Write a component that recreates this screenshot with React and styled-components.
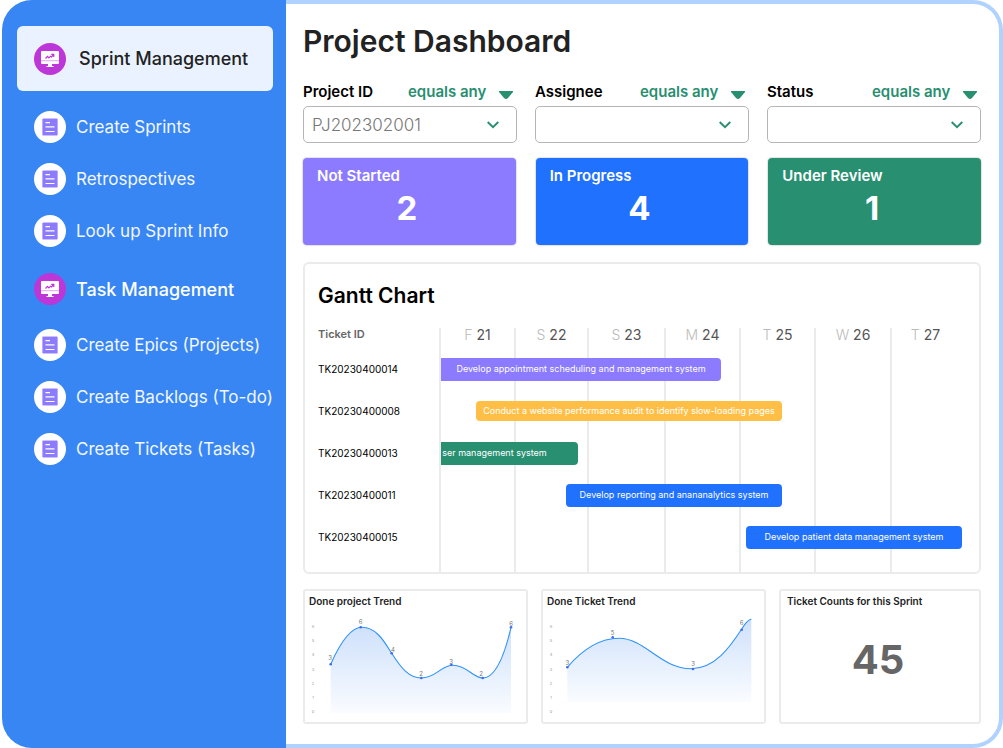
import React from "react";
import styled, { createGlobalStyle } from "styled-components";

const GlobalStyle = createGlobalStyle`
  *, *::before, *::after { box-sizing: border-box; }
  body {
    margin: 0;
    background: #fff;
    font-family: Inter, "Liberation Sans", sans-serif;
    color: #000;
  }
  h1, h2, h3, p, ul { margin: 0; padding: 0; }
  ul { list-style: none; }
`;

const colors = {
  purple: "#8c7aff",
  blue: "#2171ff",
  green: "#298f71",
  amber: "#ffbf47",
  frame: "#b0d2ff",
  line: "#ebebeb",
};

const Shell = styled.div`
  display: flex;
  min-height: 100vh;
  padding-left: 2px;
`;

const Sidebar = styled.nav`
  flex: 0 0 284px;
  padding: 26px 13px 26px 15px;
  background: #3886f4;
  border-radius: 30px 0 0 30px;
`;

const NavHeading = styled.a`
  display: flex;
  align-items: center;
  gap: ${(p) => (p.$active ? 13 : 10)}px;
  height: ${(p) => (p.$active ? 65 : 60)}px;
  margin-top: ${(p) => (p.$active ? 0 : 2)}px;
  margin-bottom: ${(p) => (p.$active ? 10 : 0)}px;
  padding-left: 17px;
  border-radius: 6px;
  background: ${(p) => (p.$active ? "#eaf2ff" : "transparent")};
  color: ${(p) => (p.$active ? "#222" : "#fff")};
  font-size: 18px;
  font-weight: 500;
  white-space: nowrap;
  text-decoration: none;
`;

const NavLink = styled.a`
  display: flex;
  align-items: center;
  gap: 10px;
  height: 52px;
  padding-left: 17px;
  color: #f3f7ff;
  font-size: 17px;
  font-weight: 400;
  white-space: nowrap;
  text-decoration: none;
`;

const Badge = styled.span`
  display: flex;
  flex: none;
  align-items: center;
  justify-content: center;
  width: 32px;
  height: 32px;
  border-radius: 50%;
  background: ${(p) => p.$color};
`;

const Main = styled.main`
  flex: 1;
  min-width: 0;
  padding: 16px 18px 16px 17px;
  border: 4px solid ${colors.frame};
  border-left: 0;
  border-radius: 0 30px 30px 0;
`;

const PageTitle = styled.h1`
  color: #222;
  font-size: 30px;
  font-weight: 600;
  line-height: 42px;
`;

const Filters = styled.div`
  display: grid;
  grid-template-columns: repeat(3, 1fr);
  gap: 18px;
  margin-top: 18px;
`;

const FilterHead = styled.div`
  display: flex;
  align-items: center;
  height: 23px;
  margin-bottom: 3px;
  padding-right: 4px;
`;

const FilterLabel = styled.label`
  flex: 1;
  font-size: 15px;
  font-weight: 600;
`;

const Operator = styled.select`
  appearance: none;
  margin: 0 12px 0 0;
  padding: 0;
  border: 0;
  background: none;
  color: ${colors.green};
  font: 600 15px Inter, sans-serif;
`;

const SelectWrap = styled.div`
  position: relative;
  svg {
    position: absolute;
    right: 17px;
    top: 14px;
    pointer-events: none;
  }
`;

const ValueSelect = styled.select`
  appearance: none;
  display: block;
  width: 100%;
  height: 37px;
  padding: 0 40px 0 8px;
  border: 1px solid #b5b5b5;
  border-radius: 5px;
  background: #fff;
  color: #777;
  font: 300 17px Inter, sans-serif;
`;

const Stats = styled.div`
  display: grid;
  grid-template-columns: repeat(3, 1fr);
  gap: 20px;
  margin-top: 15px;
`;

const StatCard = styled.section`
  height: 87px;
  padding: 8px 14px;
  border-radius: 4px;
  background: ${(p) => p.$color};
  box-shadow: 0 0 1px 1px rgba(90, 90, 120, 0.18);
  color: #fff;
`;

const StatLabel = styled.h2`
  font-size: 15px;
  font-weight: 600;
  line-height: 20px;
`;

const StatValue = styled.p`
  padding-right: 5px;
  font-size: 33px;
  font-weight: 700;
  line-height: 44px;
  text-align: center;
`;

const Gantt = styled.section`
  margin-top: 17px;
  padding: 18px 0 0 13px;
  border: 2px solid ${colors.line};
  border-radius: 6px;
`;

const GanttTitle = styled.h2`
  font-size: 21px;
  font-weight: 600;
  line-height: 28px;
`;

const GanttBody = styled.div`
  display: flex;
  margin-top: 18px;
`;

const TicketColumn = styled.div`
  flex: 0 0 121px;
`;

const TicketHead = styled.h3`
  height: 20px;
  color: #666;
  font-size: 11px;
  font-weight: 600;
  line-height: 13px;
`;

const Ticket = styled.li`
  height: 42px;
  font-size: 10px;
  line-height: 42px;
`;

const Timeline = styled.div`
  position: relative;
  flex: 1;
  min-width: 0;
`;

const Days = styled.div`
  display: grid;
  grid-template-columns: 75fr 73fr 77fr 75fr 75fr 76fr 89fr;
  height: 244px;
`;

const Day = styled.div`
  border-left: 2px solid ${colors.line};
  color: #555;
  font-size: 14px;
  line-height: 14px;
  text-align: center;
  &:last-child { padding-right: 20px; }
  span { color: #bbb; font-weight: 300; }
`;

const Bars = styled.ul`
  position: absolute;
  inset: 20px 0 auto 0;
`;

const BarRow = styled.li`
  display: flex;
  align-items: center;
  height: 42px;
`;

const Bar = styled.div`
  height: ${(p) => (p.$slim ? 20 : 23)}px;
  padding: ${(p) => (p.$open ? "0 30px 0 0" : "0")};
  border-radius: ${(p) => (p.$flat ? "0 4px 4px 0" : "4px")};
  background: ${(p) => p.$color};
  color: #fff;
  font-size: 9px;
  line-height: ${(p) => (p.$slim ? 19 : 22)}px;
  text-align: center;
  white-space: nowrap;
`;

const Reports = styled.div`
  display: grid;
  grid-template-columns: 225fr 225fr 202fr;
  gap: 13px;
  margin-top: 15px;
`;

const Report = styled.section`
  height: 135px;
  border: 2px solid ${colors.line};
  border-radius: 3px;
  svg { display: block; width: 100%; }
`;

const ReportTitle = styled.h2`
  padding-left: ${(p) => (p.$wide ? 6 : 4)}px;
  color: #222;
  font-size: 10px;
  font-weight: 600;
  line-height: 20px;
`;

const BigNumber = styled.p`
  padding-right: 4px;
  color: #666;
  font-size: 40px;
  font-weight: 700;
  line-height: 98px;
  text-align: center;
`;

const DocIcon = () => (
  <svg width="16" height="18" viewBox="0 0 16 18" aria-hidden="true">
    <rect x="0.5" width="15" height="18" rx="0.8" fill="#c9c0ff" />
    <rect x="0.5" y="1" width="15" height="16" fill="#8c7aff" />
    <path d="M3.5 4.7h4.5M3.5 8.9h9M3.5 13.5h9" stroke="#fff" strokeWidth="1.2" />
  </svg>
);

const MonitorIcon = () => (
  <svg width="18" height="16" viewBox="0 0 18 16" aria-hidden="true">
    <rect width="18" height="13" rx="1" fill="#fff" />
    <path d="M7 13h4v2h1.5v1h-7v-1H7z" fill="#fff" />
    <path d="M0 9.7h18" stroke="#d98be8" strokeWidth="0.8" />
    <path d="M4.5 7.5l2-2.2 1.4 1.5 1.6-1.6 1 .8 2-2.4M10.2 3.4h2.6v2.6" fill="none" stroke="#bd36d8" strokeWidth="1.2" />
  </svg>
);

const Triangle = () => (
  <svg width="14" height="8" viewBox="0 0 14 8" aria-hidden="true">
    <path d="M0 0h14v.9L9 6.9Q7 8.9 5 6.9L0 .9z" fill={colors.green} />
  </svg>
);

const TriangleSlot = styled.span`
  display: flex;
  padding-top: 6px;
`;

const Chevron = () => (
  <svg width="14" height="10" viewBox="0 0 14 10" aria-hidden="true">
    <path d="M1.7 2l5.3 5.2L12.3 2" fill="none" stroke={colors.green} strokeWidth="1.9" />
  </svg>
);

const filters = [
  { id: "project", label: "Project ID", value: "PJ202302001" },
  { id: "assignee", label: "Assignee", value: "" },
  { id: "status", label: "Status", value: "" },
];

const stats = [
  { label: "Not Started", value: 2, color: colors.purple },
  { label: "In Progress", value: 4, color: colors.blue },
  { label: "Under Review", value: 1, color: colors.green },
];

const days = [["F", 21], ["S", 22], ["S", 23], ["M", 24], ["T", 25], ["W", 26], ["T", 27]];

const SPAN = 540;
const tasks = [
  { id: "TK20230400014", text: "Develop appointment scheduling and management system", from: 2, to: 282, color: colors.purple, flat: true },
  { id: "TK20230400008", text: "Conduct a website performance audit to identify slow-loading pages", from: 37, to: 343, color: colors.amber, slim: true },
  { id: "TK20230400013", text: "ser management system", from: 2, to: 139, color: colors.green, flat: true, open: true },
  { id: "TK20230400011", text: "Develop reporting and anananalytics system", from: 127, to: 343, color: colors.blue },
  { id: "TK20230400015", text: "Develop patient data management system", from: 307, to: 523, color: colors.blue },
];

const trends = [
  {
    id: "project",
    title: "Done project Trend",
    floor: 102,
    line: "M25.7 53.3C36 30 46 16.3 57 16.3C72 16.3 80 32 86.7 42.3C96 57 104 67 116.3 67C131 67 136 54.3 148 54.3C162 54.3 168 67 177.7 67C192 67 201 38 206 16.3",
    points: [[25.7, 53.3, 3, 25, 49], [55.7, 16.3, 6, 55.7, 13], [86.7, 42.3, 4, 88, 41], [116.3, 67, 2, 116, 65], [146.3, 53.7, 3, 146, 53], [177.7, 67, 2, 176, 65], [206, 16.3, 6, 206, 15]],
  },
  {
    id: "ticket",
    title: "Done Ticket Trend",
    floor: 91,
    line: "M24.3 56.3C40 38 58 27.3 76 27.3C102 27.3 118 57.7 148 57.7C172 57.7 187 36 198.7 18C203 11 205 9 208.3 8",
    points: [[24.3, 56.3, 3, 24.3, 54], [69.7, 26.3, 5, 69.7, 24], [150, 58, 3, 150, 55], [198.7, 18.7, 6, 198.7, 14]],
  },
];

const AxisText = styled.text`
  fill: #999;
  font-size: 4px;
  text-anchor: middle;
`;

const PointText = styled.text`
  fill: #777;
  font-size: 6px;
  text-anchor: middle;
`;

const TrendChart = ({ data }) => (
  <svg viewBox="0 0 221 110" role="img" aria-label={data.title}>
    <defs>
      <linearGradient id={`fill-${data.id}`} x1="0" y1="0" x2="0" y2="1">
        <stop offset="0" stopColor="#cfe1fb" />
        <stop offset="1" stopColor="#fafcff" />
      </linearGradient>
    </defs>
    <path d={`${data.line}V${data.floor}H${data.points[0][0]}Z`} fill={`url(#fill-${data.id})`} />
    <path d={data.line} fill="none" stroke="#2e93fa" strokeWidth="1.1" />
    {[6, 5, 4, 3, 2, 1, 0].map((n, i) => (
      <AxisText key={n} x="8" y={17 + i * 14.2}>{n}</AxisText>
    ))}
    {data.points.map(([x, y, value, tx, ty]) => (
      <g key={x}>
        <circle cx={x} cy={y} r="1.3" fill="#3c6df0" />
        <PointText x={tx} y={ty}>{value}</PointText>
      </g>
    ))}
  </svg>
);

const NavGroup = ({ title, active, items }) => (
  <>
    <NavHeading href="#" $active={active}>
      <Badge $color="#bd36d8"><MonitorIcon /></Badge>
      {title}
    </NavHeading>
    {items.map((item) => (
      <NavLink href="#" key={item}>
        <Badge $color="#fff"><DocIcon /></Badge>
        {item}
      </NavLink>
    ))}
  </>
);

export default function App() {
  return (
    <>
      <GlobalStyle />
      <Shell>
        <Sidebar>
          <NavGroup active title="Sprint Management" items={["Create Sprints", "Retrospectives", "Look up Sprint Info"]} />
          <NavGroup title="Task Management" items={["Create Epics (Projects)", "Create Backlogs (To-do)", "Create Tickets (Tasks)"]} />
        </Sidebar>
        <Main>
          <PageTitle>Project Dashboard</PageTitle>
          <Filters>
            {filters.map((f) => (
              <div key={f.id}>
                <FilterHead>
                  <FilterLabel htmlFor={f.id}>{f.label}</FilterLabel>
                  <Operator aria-label={`${f.label} operator`}>
                    <option>equals any</option>
                  </Operator>
                  <TriangleSlot><Triangle /></TriangleSlot>
                </FilterHead>
                <SelectWrap>
                  <ValueSelect id={f.id}>
                    <option>{f.value}</option>
                  </ValueSelect>
                  <Chevron />
                </SelectWrap>
              </div>
            ))}
          </Filters>
          <Stats>
            {stats.map((s) => (
              <StatCard key={s.label} $color={s.color}>
                <StatLabel>{s.label}</StatLabel>
                <StatValue>{s.value}</StatValue>
              </StatCard>
            ))}
          </Stats>
          <Gantt>
            <GanttTitle>Gantt Chart</GanttTitle>
            <GanttBody>
              <TicketColumn>
                <TicketHead>Ticket ID</TicketHead>
                <ul>
                  {tasks.map((t) => <Ticket key={t.id}>{t.id}</Ticket>)}
                </ul>
              </TicketColumn>
              <Timeline>
                <Days>
                  {days.map(([letter, date]) => (
                    <Day key={date}><span>{letter}</span> {date}</Day>
                  ))}
                </Days>
                <Bars>
                  {tasks.map((t) => (
                    <BarRow key={t.id}>
                      <Bar
                        $color={t.color}
                        $flat={t.flat}
                        $slim={t.slim}
                        $open={t.open}
                        style={{
                          marginLeft: `${(t.from / SPAN) * 100}%`,
                          width: `${((t.to - t.from) / SPAN) * 100}%`,
                        }}
                      >
                        {t.text}
                      </Bar>
                    </BarRow>
                  ))}
                </Bars>
              </Timeline>
            </GanttBody>
          </Gantt>
          <Reports>
            {trends.map((t) => (
              <Report key={t.id}>
                <ReportTitle>{t.title}</ReportTitle>
                <TrendChart data={t} />
              </Report>
            ))}
            <Report>
              <ReportTitle $wide>Ticket Counts for this Sprint</ReportTitle>
              <BigNumber>45</BigNumber>
            </Report>
          </Reports>
        </Main>
      </Shell>
    </>
  );
}
